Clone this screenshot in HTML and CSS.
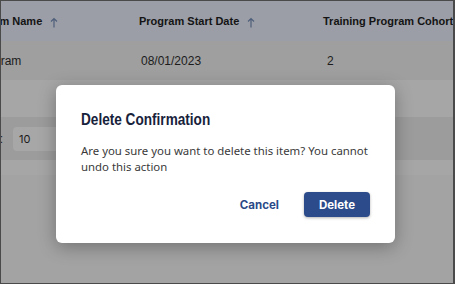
FILE: index.html
```html
<!DOCTYPE html>
<html lang="en">
<head>
    <meta charset="UTF-8">
    <meta name="viewport" content="width=device-width, initial-scale=1.0">
    <title>Delete Confirmation</title>
    <link rel="stylesheet" href="styles.css">
</head>
<body>
    <div class="screen">
        <div class="grid-table">
            <div class="row head">
                <div class="cell">Program Name<svg class="sort" width="8" height="11" viewBox="0 0 8 11"><path d="M4 10.5V1.5M1 4.5L4 1.5L7 4.5" fill="none" stroke="#4f5f7a" stroke-width="1.2"/></svg></div>
                <div class="cell">Program Start Date<svg class="sort" width="8" height="11" viewBox="0 0 8 11"><path d="M4 10.5V1.5M1 4.5L4 1.5L7 4.5" fill="none" stroke="#4f5f7a" stroke-width="1.2"/></svg></div>
                <div class="cell">Training Program Cohort</div>
            </div>
            <div class="row body-row">
                <div class="cell name">Test Program</div>
                <div class="cell date">08/01/2023</div>
                <div class="cell num">2</div>
            </div>
        </div>
        <div class="spacer"></div>
        <div class="pager">
            <span class="pager-label">Rows per page:</span>
            <span class="page-size">10</span>
        </div>
        <div class="spacer small"></div>
        <div class="rest"></div>

        <!-- dialog over the dimmed page -->
        <div class="modal">
            <h2 class="modal-title"><span>Delete Confirmation</span></h2>
            <p class="modal-text">Are you sure you want to delete this item? You cannot undo this action</p>
            <div class="modal-actions">
                <button class="btn btn-text">Cancel</button>
                <button class="btn btn-primary">Delete</button>
            </div>
        </div>
    </div>
</body>
</html>
```

FILE: styles.css
```css
body {
    margin: 0;
    font-family: "Liberation Sans", Arial, sans-serif;
}
.screen {
    position: relative;
    width: 455px;
    height: 284px;
    box-sizing: border-box;
    border: 1px solid #4a4a4a;
    border-right-width: 2px;
    background: #a3a3a3;
    overflow: hidden;
}
.grid-table {
    margin-left: -37px;
}
.row {
    display: grid;
    grid-template-columns: 175px 184px 184px;
    align-items: center;
}
.head {
    height: 40px;
    background: #9b9ea7;
    font-weight: bold;
    font-size: 11px;
    color: #141414;
}
.body-row {
    height: 39px;
    background: #9f9f9f;
    font-size: 12px;
    color: #1c1c1c;
}
.cell {
    white-space: nowrap;
    display: flex;
    align-items: center;
}
.name {
    margin-left: -14px;
}
.date {
    padding-left: 2px;
}
.num {
    padding-left: 4px;
}
.sort {
    margin-left: 8px;
    margin-top: 2px;
}
.spacer {
    height: 37px;
    background: #a6a6a6;
}
.spacer.small {
    height: 15px;
}
.pager {
    height: 43px;
    background: #9c9c9c;
    display: flex;
    align-items: center;
    font-size: 12px;
    color: #1c1c1c;
}
.pager-label {
    width: 100px;
    margin-left: -98px;
    text-align: right;
}
.page-size {
    margin-left: 10px;
    width: 60px;
    height: 24px;
    box-sizing: border-box;
    padding: 5px 6px;
    background: #a7a7a7;
    border-radius: 4px;
    font-family: "Inter", sans-serif;
    font-size: 11px;
}
.rest {
    height: 150px;
    background: #a3a3a3;
}
.modal {
    position: absolute;
    left: 55px;
    top: 84px;
    width: 339px;
    height: 158px;
    box-sizing: border-box;
    padding: 25px 25px 25px 25px;
    background: #fff;
    border-radius: 6px;
    box-shadow: 0 4px 18px rgba(0, 0, 0, 0.3);
}
.modal-title {
    margin: 0;
    font-family: "Liberation Sans", sans-serif;
    font-size: 17px;
    line-height: 20px;
    font-weight: bold;
    color: #17223b;
}
.modal-title span {
    display: inline-block;
    transform: scaleX(0.8);
    transform-origin: left center;
}
.modal-text {
    margin: 13px 0 0 0;
    font-family: "Noto Sans", sans-serif;
    font-size: 11.4px;
    line-height: 16px;
    color: #3a3a3a;
}
.modal-actions {
    margin-top: 17px;
    display: flex;
    justify-content: flex-end;
    gap: 13px;
}
.btn {
    height: 25px;
    border: none;
    border-radius: 4px;
    font-family: "Inter", sans-serif;
    font-weight: bold;
    font-size: 11.5px;
    cursor: pointer;
}
.btn-text {
    background: none;
    color: #2b4a88;
    padding: 0 12px;
}
.btn-primary {
    background: #2c4b8b;
    color: #fff;
    padding: 0 15px;
    box-shadow: 0 1px 3px rgba(0, 0, 0, 0.3);
}
```
